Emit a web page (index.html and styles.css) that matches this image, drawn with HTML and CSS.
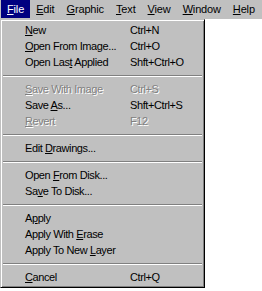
FILE: index.html
```html
<!DOCTYPE html>
<html><head><meta charset="utf-8">
<title>File menu</title>
<link rel="stylesheet" href="styles.css">
</head>
<body>

<div class="menubar">
	<span class="top open"><u>F</u>ile</span>
	<span class="top"><u>E</u>dit</span>
	<span class="top"><u>G</u>raphic</span>
	<span class="top"><u>T</u>ext</span>
	<span class="top"><u>V</u>iew</span>
	<span class="top"><u>W</u>indow</span>
	<span class="top"><u>H</u>elp</span>
</div>

<div class="drop">
	<div class="row"><span><u>N</u>ew</span><span>Ctrl+N</span></div>
	<div class="row"><span><u>O</u>pen From Image...</span><span>Ctrl+O</span></div>
	<div class="row"><span>Open Las<u>t</u> Applied</span><span>Shft+Ctrl+O</span></div>
	<div class="sep"></div>
	<div class="row off"><span><u>S</u>ave With Image</span><span>Ctrl+S</span></div>
	<div class="row"><span>Save <u>A</u>s...</span><span>Shft+Ctrl+S</span></div>
	<div class="row off"><span><u>R</u>evert</span><span>F12</span></div>
	<div class="sep"></div>
	<div class="row"><span>Edit <u>D</u>rawings...</span><span></span></div>
	<div class="sep"></div>
	<div class="row"><span>Open <u>F</u>rom Disk...</span><span></span></div>
	<div class="row"><span>Sa<u>v</u>e To Disk...</span><span></span></div>
	<div class="sep"></div>
	<div class="row"><span>A<u>p</u>ply</span><span></span></div>
	<div class="row"><span>Apply With <u>E</u>rase</span><span></span></div>
	<div class="row"><span>Apply To New <u>L</u>ayer</span><span></span></div>
	<div class="sep"></div>
	<div class="row"><span><u>C</u>ancel</span><span>Ctrl+Q</span></div>
</div>

</body>
</html>
```

FILE: styles.css
```css
body {
	margin: 0;
	background: #fff;
	font-family: "Liberation Sans", Arial, sans-serif;
	font-size: 11px;
	letter-spacing: -0.4px;
	color: #000;
}
u {
	text-decoration: underline;
	text-underline-offset: 1px;
}
.menubar {
	display: flex;
	height: 19px;
	padding-left: 1px;
	background: #c0c0c0;
	letter-spacing: -0.15px;
}
.top {
	height: 18px;
	line-height: 18px;
	padding: 0 6px;
}
.top.open {
	background: #000080;
	color: #fff;
}
.drop {
	width: 205px;
	box-sizing: border-box;
	padding: 2px 0;
	background: #c0c0c0;
	border-top: 1px solid #c0c0c0;
	border-left: 1px solid #c0c0c0;
	border-right: 1px solid #000;
	border-bottom: 1px solid #000;
	box-shadow: inset 1px 1px 0 #fff, inset -1px -1px 0 #808080;
}
.row {
	display: grid;
	grid-template-columns: 105px 1fr;
	height: 16px;
	line-height: 16px;
	padding-left: 24px;
	white-space: nowrap;
}
.row.off {
	color: #808080;
	text-shadow: 1px 1px 0 #fff;
}
.sep {
	box-sizing: border-box;
	height: 11px;
	padding-top: 5px;
	margin: 0 2px;
}
.sep::before {
	content: "";
	display: block;
	border-top: 1px solid #808080;
	border-bottom: 1px solid #fff;
}
```
